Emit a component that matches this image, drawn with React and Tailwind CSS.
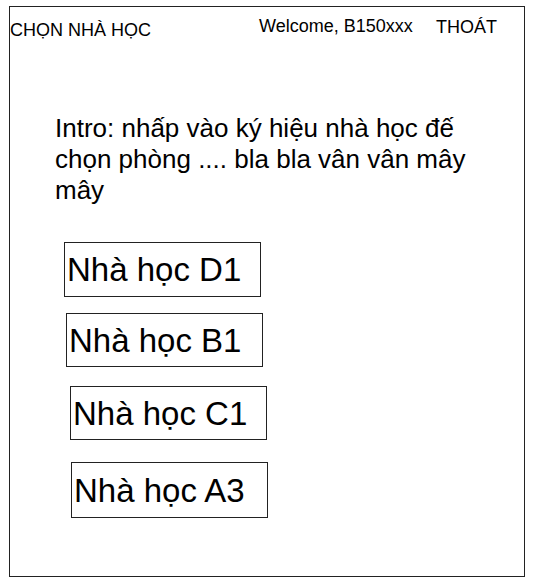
import React from "react";

// Buildings listed on the picker page
const buildings = [
  { id: "D1", label: "Nhà học D1", box: "mt-[36px] ml-[54px] h-[55px]" },
  { id: "B1", label: "Nhà học B1", box: "mt-[16px] ml-[56px] h-[54px]" },
  { id: "C1", label: "Nhà học C1", box: "mt-[19px] ml-[60px] h-[54px]" },
  { id: "A3", label: "Nhà học A3", box: "mt-[22px] ml-[61px] h-[56px]" },
];

const BuildingButton = ({ label, box }) => (
  <button
    className={`flex w-[197px] items-center border border-[#222] bg-white pl-[2px] text-left text-[33px] leading-none text-black ${box}`}
  >
    {label}
  </button>
);

const App = () => {
  return (
    <div
      className="min-h-[588px] bg-white pl-[9px] pt-[6px]"
      style={{ fontFamily: '"Liberation Sans", Arial, sans-serif' }}
    >
      <div className="flex h-[571px] w-[516px] flex-col border border-[#222]">
        {/* Header */}
        <div className="flex h-[40px] items-start text-[18px] leading-none text-black">
          <span className="mt-[14px] w-[249px]">CHỌN NHÀ HỌC</span>
          <span className="mt-[10px] w-[177px]">Welcome, B150xxx</span>
          <span className="mt-[11px]">THOÁT</span>
        </div>

        {/* Intro */}
        <p className="ml-[45px] mt-[66px] w-[440px] text-[26px] leading-[31px] text-black">
          Intro: nhấp vào ký hiệu nhà học đế chọn phòng .... bla bla vân vân mây mây
        </p>

        {/* Buildings */}
        <div className="flex flex-col">
          {buildings.map((b) => (
            <BuildingButton key={b.id} label={b.label} box={b.box} />
          ))}
        </div>
      </div>
    </div>
  );
};

export default App;
